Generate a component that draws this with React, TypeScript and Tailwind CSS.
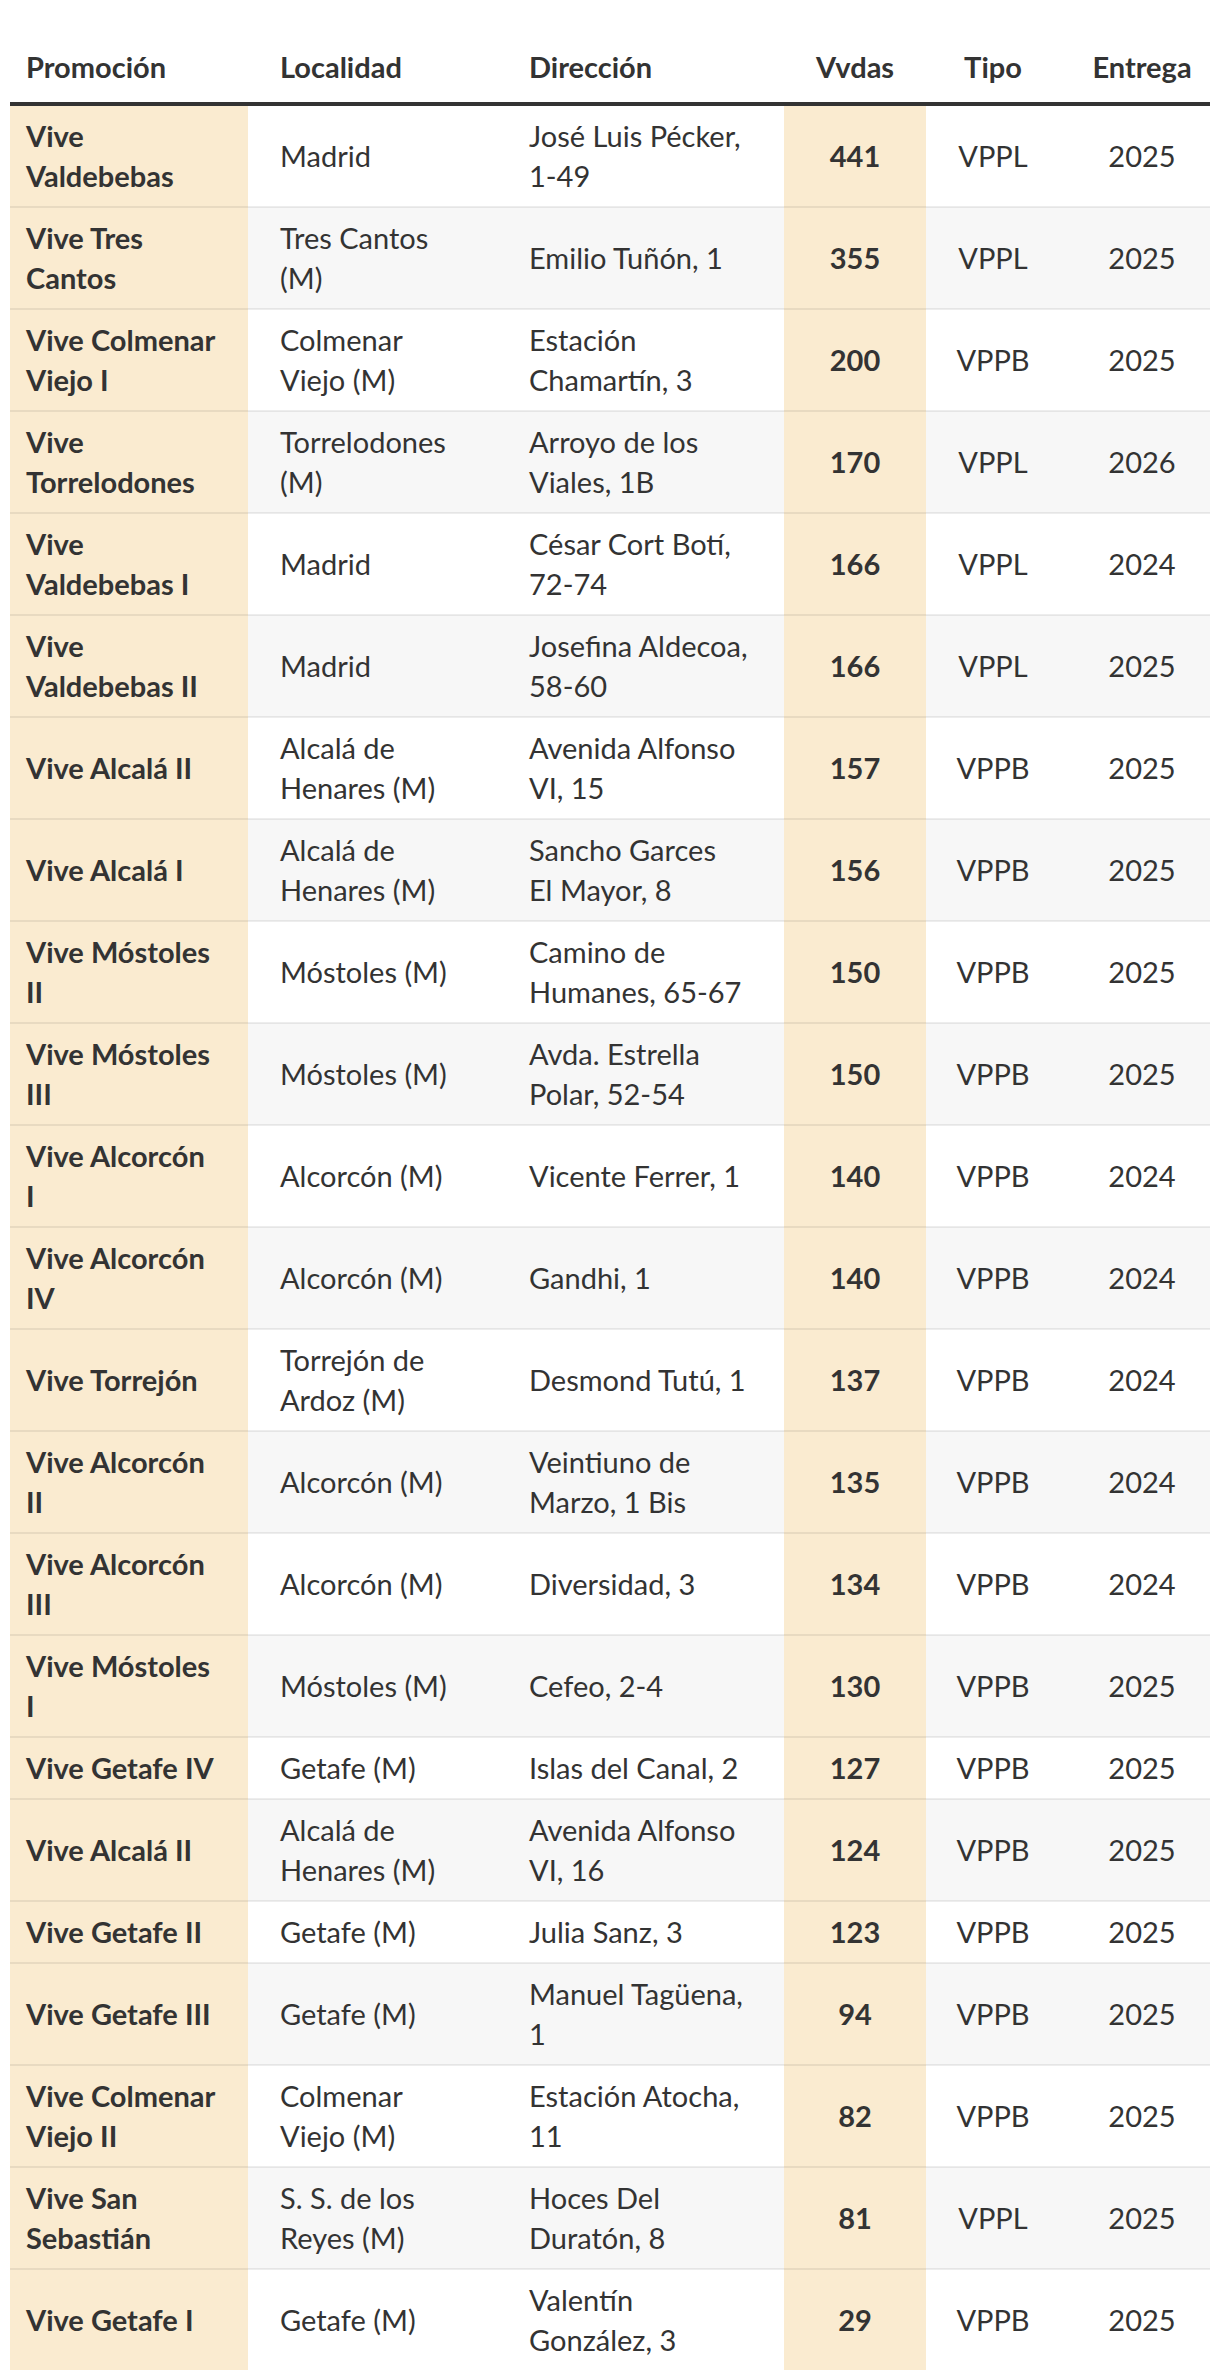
type Row = {
  promo: string;
  loc: string;
  dir: string;
  vvdas: number;
  tipo: string;
  entrega: number;
};

const rows: Row[] = [
  { promo: "Vive\nValdebebas", loc: "Madrid", dir: "José Luis Pécker,\n1-49", vvdas: 441, tipo: "VPPL", entrega: 2025 },
  { promo: "Vive Tres\nCantos", loc: "Tres Cantos\n(M)", dir: "Emilio Tuñón, 1", vvdas: 355, tipo: "VPPL", entrega: 2025 },
  { promo: "Vive Colmenar\nViejo I", loc: "Colmenar\nViejo (M)", dir: "Estación\nChamartín, 3", vvdas: 200, tipo: "VPPB", entrega: 2025 },
  { promo: "Vive\nTorrelodones", loc: "Torrelodones\n(M)", dir: "Arroyo de los\nViales, 1B", vvdas: 170, tipo: "VPPL", entrega: 2026 },
  { promo: "Vive\nValdebebas I", loc: "Madrid", dir: "César Cort Botí,\n72-74", vvdas: 166, tipo: "VPPL", entrega: 2024 },
  { promo: "Vive\nValdebebas II", loc: "Madrid", dir: "Josefina Aldecoa,\n58-60", vvdas: 166, tipo: "VPPL", entrega: 2025 },
  { promo: "Vive Alcalá II", loc: "Alcalá de\nHenares (M)", dir: "Avenida Alfonso\nVI, 15", vvdas: 157, tipo: "VPPB", entrega: 2025 },
  { promo: "Vive Alcalá I", loc: "Alcalá de\nHenares (M)", dir: "Sancho Garces\nEl Mayor, 8", vvdas: 156, tipo: "VPPB", entrega: 2025 },
  { promo: "Vive Móstoles\nII", loc: "Móstoles (M)", dir: "Camino de\nHumanes, 65-67", vvdas: 150, tipo: "VPPB", entrega: 2025 },
  { promo: "Vive Móstoles\nIII", loc: "Móstoles (M)", dir: "Avda. Estrella\nPolar, 52-54", vvdas: 150, tipo: "VPPB", entrega: 2025 },
  { promo: "Vive Alcorcón\nI", loc: "Alcorcón (M)", dir: "Vicente Ferrer, 1", vvdas: 140, tipo: "VPPB", entrega: 2024 },
  { promo: "Vive Alcorcón\nIV", loc: "Alcorcón (M)", dir: "Gandhi, 1", vvdas: 140, tipo: "VPPB", entrega: 2024 },
  { promo: "Vive Torrejón", loc: "Torrejón de\nArdoz (M)", dir: "Desmond Tutú, 1", vvdas: 137, tipo: "VPPB", entrega: 2024 },
  { promo: "Vive Alcorcón\nII", loc: "Alcorcón (M)", dir: "Veintiuno de\nMarzo, 1 Bis", vvdas: 135, tipo: "VPPB", entrega: 2024 },
  { promo: "Vive Alcorcón\nIII", loc: "Alcorcón (M)", dir: "Diversidad, 3", vvdas: 134, tipo: "VPPB", entrega: 2024 },
  { promo: "Vive Móstoles\nI", loc: "Móstoles (M)", dir: "Cefeo, 2-4", vvdas: 130, tipo: "VPPB", entrega: 2025 },
  { promo: "Vive Getafe IV", loc: "Getafe (M)", dir: "Islas del Canal, 2", vvdas: 127, tipo: "VPPB", entrega: 2025 },
  { promo: "Vive Alcalá II", loc: "Alcalá de\nHenares (M)", dir: "Avenida Alfonso\nVI, 16", vvdas: 124, tipo: "VPPB", entrega: 2025 },
  { promo: "Vive Getafe II", loc: "Getafe (M)", dir: "Julia Sanz, 3", vvdas: 123, tipo: "VPPB", entrega: 2025 },
  { promo: "Vive Getafe III", loc: "Getafe (M)", dir: "Manuel Tagüena,\n1", vvdas: 94, tipo: "VPPB", entrega: 2025 },
  { promo: "Vive Colmenar\nViejo II", loc: "Colmenar\nViejo (M)", dir: "Estación Atocha,\n11", vvdas: 82, tipo: "VPPB", entrega: 2025 },
  { promo: "Vive San\nSebastián", loc: "S. S. de los\nReyes (M)", dir: "Hoces Del\nDuratón, 8", vvdas: 81, tipo: "VPPL", entrega: 2025 },
  { promo: "Vive Getafe I", loc: "Getafe (M)", dir: "Valentín\nGonzález, 3", vvdas: 29, tipo: "VPPB", entrega: 2025 },
];

export default function App() {
  return (
    <div className="bg-white pt-[37px] px-[10px] text-[#333] font-['Lato','Open_Sans',sans-serif] text-[29px] leading-[40px]">
      <table className="w-[1200px] table-fixed border-collapse">
        <colgroup>
          <col className="w-[238px]" />
          <col className="w-[249px]" />
          <col className="w-[287px]" />
          <col className="w-[142px]" />
          <col className="w-[134px]" />
          <col className="w-[150px]" />
        </colgroup>
        <thead>
          <tr className="border-b-4 border-[#333]">
            <th className="pl-[16px] pt-[10px] pb-[15px] text-left font-bold">Promoción</th>
            <th className="pl-[32px] pt-[10px] pb-[15px] text-left font-bold">Localidad</th>
            <th className="pl-[32px] pt-[10px] pb-[15px] text-left font-bold">Dirección</th>
            <th className="pt-[10px] pb-[15px] text-center font-bold">Vvdas</th>
            <th className="pt-[10px] pb-[15px] text-center font-bold">Tipo</th>
            <th className="pl-[14px] pt-[10px] pb-[15px] text-center font-bold">Entrega</th>
          </tr>
        </thead>
        <tbody>
          {rows.map((r, i) => (
            <tr
              key={i}
              className={
                (i % 2 === 0 ? "bg-white" : "bg-[#f7f7f7]") +
                (i < rows.length - 1 ? " border-b-2 border-[rgba(0,0,0,0.07)]" : "")
              }
            >
              <td className="bg-[#faebd0] pl-[16px] py-[10px] font-bold whitespace-pre-line">{r.promo}</td>
              <td className="pl-[32px] py-[10px] whitespace-pre-line">{r.loc}</td>
              <td className="pl-[32px] py-[10px] whitespace-pre-line">{r.dir}</td>
              <td className="bg-[#faebd0] py-[10px] text-center font-bold">{r.vvdas}</td>
              <td className="py-[10px] text-center">{r.tipo}</td>
              <td className="pl-[14px] py-[10px] text-center">{r.entrega}</td>
            </tr>
          ))}
        </tbody>
      </table>
    </div>
  );
}
